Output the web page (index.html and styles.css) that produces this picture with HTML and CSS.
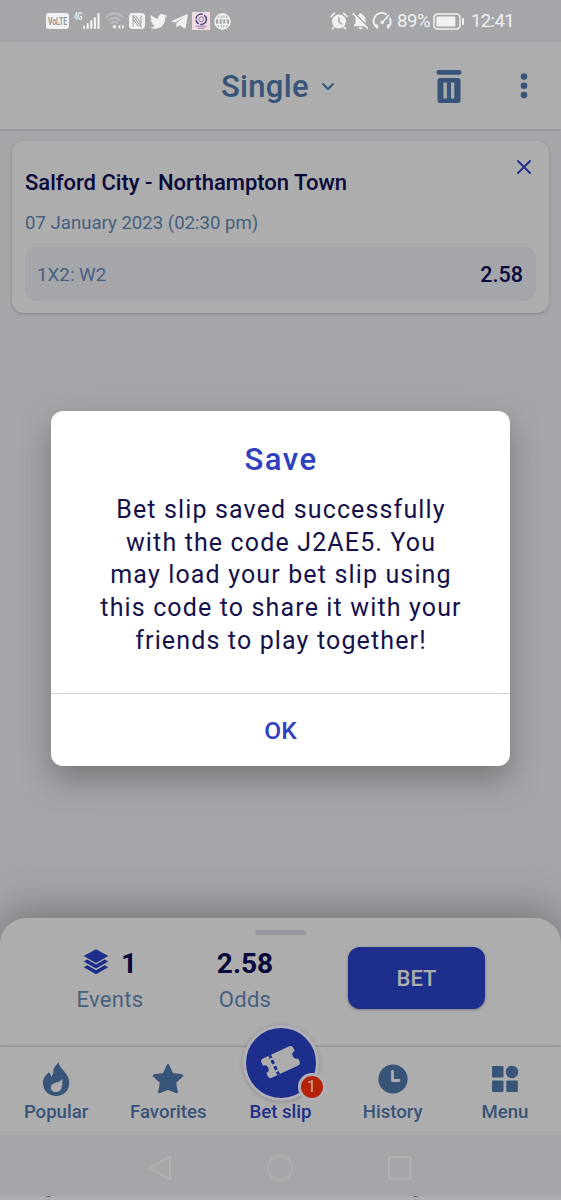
FILE: index.html
```html
<!DOCTYPE html>
<html lang="en">
<head>
  <meta charset="UTF-8">
  <meta name="viewport" content="width=device-width, initial-scale=1.0">
  <title>Bet slip</title>
  <link rel="stylesheet" href="styles.css">
</head>
<body>
  <div class="screen">
    <div class="status-bar">
      <div class="status-left">
        <svg class="volte" width="23" height="16" viewBox="0 0 23 16">
          <rect width="23" height="16" rx="3" fill="#f0f1f1"/>
          <text x="2" y="11.500" textLength="19" lengthAdjust="spacingAndGlyphs">VoLTE</text>
        </svg>
        <svg class="net" width="9" height="9" viewBox="0 0 9 9"><text x="0" y="8" textLength="8.500" lengthAdjust="spacingAndGlyphs">4G</text></svg>
        <svg class="signal" width="17" height="16" viewBox="0 0 17 16" fill="#f0f1f1">
          <rect x="0" y="12.500" width="2" height="3.500" rx="1"/>
          <rect x="3.600" y="10" width="2.200" height="6" rx="1"/>
          <rect x="7.200" y="7" width="2.200" height="9" rx="1"/>
          <rect x="10.800" y="4" width="2.200" height="12" rx="1"/>
          <rect x="14.400" y="0" width="2.200" height="16" rx="1"/>
        </svg>
        <svg class="wifi" width="20" height="18" viewBox="0 0 20 18" fill="none" stroke="#bcbdc0" stroke-width="1.800">
          <path d="M.8 5.200Q9.500-2.700 18.200 5.200"/>
          <path d="M3.600 8.400Q9.500 3 15.400 8.400"/>
          <path d="M6.200 11.300Q9.500 8.300 12.800 11.300"/>
          <circle cx="9.500" cy="14.800" r="1.700" fill="#f0f1f1" stroke="none"/>
          <path d="M12.800 14.800l2.600-2.400v4.800zM19.600 14.800l-2.600-2.400v4.800z" fill="#f0f1f1" stroke="none"/>
        </svg>
        <svg class="nfc" width="16" height="16" viewBox="0 0 16 16">
          <rect width="16" height="16" rx="3.500" fill="#f0f1f1"/>
          <path d="M4 13.500V2.500L8.500 9M11.900 2.500V13.500L7.500 7.200M6.500 2.500L11.900 10.200M4 5.800L9.400 13.500" fill="none" stroke="#a5a6aa" stroke-width="1.100"/>
        </svg>
        <svg class="bird" width="17" height="15" viewBox="0 2 24 20" preserveAspectRatio="none" fill="#f0f1f1">
          <path d="M23.950 4.570a10 10 0 0 1-2.820.770 4.960 4.960 0 0 0 2.160-2.720 9.900 9.900 0 0 1-3.120 1.180 4.920 4.920 0 0 0-8.380 4.480A13.930 13.930 0 0 1 1.640 3.160a4.920 4.920 0 0 0 1.520 6.570 4.900 4.900 0 0 1-2.230-.610v.060a4.920 4.920 0 0 0 3.950 4.830 5 5 0 0 1-2.210.080 4.940 4.940 0 0 0 4.600 3.420A9.870 9.870 0 0 1 0 19.540a14 14 0 0 0 7.550 2.210c9.050 0 14-7.500 14-13.990 0-.210 0-.420-.020-.630a9.940 9.940 0 0 0 2.420-2.560z"/>
        </svg>
        <svg class="plane" width="17" height="15" viewBox="0 0 17 15" fill="#f0f1f1">
          <path d="M.5 7L16 .2Q17 0 16.800 1L14.600 13.800Q14.200 15 13.200 14.300L8.500 10.900L6 13.200Q5.300 13.500 5.300 12.500V9.200L13.200 3L4 8.400L.7 7.600Q0 7.300.5 7z"/>
        </svg>
        <svg class="crest" width="18" height="18" viewBox="0 0 18 18">
          <rect width="18" height="18" fill="#f3dbe3"/>
          <circle cx="9.200" cy="7.300" r="5.200" fill="none" stroke="#4a4380" stroke-width="1.500" stroke-dasharray="9 1.500 5 1"/>
          <circle cx="9.200" cy="7.300" r="2.500" fill="none" stroke="#7a70a8" stroke-width=".9"/>
          <path d="M3.500 14.300h11M6 16.300h6.500" stroke="#8f84ac" stroke-width="1"/>
        </svg>
        <svg class="globe" width="17" height="17" viewBox="0 0 17 17" fill="none" stroke="#f0f1f1" stroke-width="1.500">
          <circle cx="8.500" cy="8.500" r="7.500"/>
          <ellipse cx="8.500" cy="8.500" rx="3.600" ry="7.500"/>
          <path d="M8.500 1v15M1.800 5.500h13.400M1.800 11.500h13.400"/>
        </svg>
      </div>
      <div class="status-right">
        <svg width="18" height="18" viewBox="0 0 18 18">
          <circle cx="9" cy="9.500" r="7" fill="#f0f1f1"/>
          <path d="M1 4.500L4.500 1.200M17 4.500L13.500 1.200M4 15l-1.500 1.700M14 15l1.500 1.700" stroke="#f0f1f1" stroke-width="1.700" stroke-linecap="round"/>
          <path d="M9 5.500V10l3 2.300" fill="none" stroke="#a5a6aa" stroke-width="1.500"/>
        </svg>
        <svg class="bell" width="17" height="18" viewBox="0 0 17 18">
          <path d="M2 14.200V13L3.500 11.300V7.500Q3.700 3.500 7 2.600Q7.200 1 8.500 1T10 2.600Q13.300 3.500 13.500 7.500V11.300L15 13V14.200zM6.500 15.300h4Q10.300 17.200 8.500 17.200T6.500 15.300z" fill="#f0f1f1"/>
          <path d="M2.300 1.200L17 16" stroke="#a5a6aa" stroke-width="1.800"/>
          <path d="M.8 1.400L15.800 16.600" stroke="#f0f1f1" stroke-width="1.500"/>
        </svg>
        <svg class="gauge" width="19" height="18" viewBox="0 0 19 18" fill="none" stroke="#f0f1f1" stroke-width="1.900" stroke-linecap="round">
          <path d="M4.300 15.800A8 8 0 0 1 13 2.200M16.800 6.500A8 8 0 0 1 14.800 15.800M4.300 15.800l-.2-2.500M14.800 15.800l.2-2.500"/>
          <path d="M15.500 3.200L9.300 10.500" stroke-width="1.500"/>
          <circle cx="9.200" cy="10.500" r=".7" fill="#f0f1f1"/>
        </svg>
        <span class="percent">89%</span>
        <svg class="battery" width="32" height="17" viewBox="0 0 32 17">
          <rect x="1" y="1" width="26" height="15" rx="3.500" fill="none" stroke="#f0f1f1" stroke-width="1.500"/>
          <rect x="3.300" y="3.400" width="19" height="10.200" rx="1" fill="#f0f1f1"/>
          <rect x="29" y="5" width="2" height="7" rx="1" fill="#f0f1f1"/>
        </svg>
        <span class="clock">12:41</span>
      </div>
    </div>

    <header class="header">
      <div class="mode">
        <span>Single</span>
        <svg width="14" height="10" viewBox="0 0 14 10" fill="none" stroke="#385478" stroke-width="2" stroke-linecap="round" stroke-linejoin="round"><path d="M2 2l5 5 5-5"/></svg>
      </div>
      <svg class="trash" width="26" height="34" viewBox="0 0 26 34" fill="#385478">
        <rect x=".5" y="0" width="25" height="4.700" rx="2.300"/>
        <path fill-rule="evenodd" d="M4 8h18q2.500 0 2.500 2.500v20q0 2.500-2.500 2.500H4q-2.500 0-2.500-2.500v-20Q1.500 8 4 8zM7.500 12.500v16h3.300v-16zM15 12.500v16h3.300v-16z"/>
      </svg>
      <svg class="more" width="8" height="28" viewBox="0 0 8 28" fill="#385478"><circle cx="4" cy="4.500" r="3.300"/><circle cx="4" cy="13.800" r="3.300"/><circle cx="4" cy="23" r="3.300"/></svg>
    </header>

    <main class="content">
      <div class="bet-card">
        <svg class="remove" width="16" height="16" viewBox="0 0 16 16" stroke="#1e2e8c" stroke-width="1.900" stroke-linecap="round"><path d="M2 2l12 12M14 2L2 14"/></svg>
        <h2>Salford City - Northampton Town</h2>
        <p class="date">07 January 2023 (02:30 pm)</p>
        <div class="pick">
          <span>1X2: W2</span>
          <b>2.58</b>
        </div>
      </div>
    </main>

    <section class="sheet">
      <div class="handle"></div>
      <div class="summary">
        <div class="stat events">
          <div class="value">
            <svg width="26" height="26" viewBox="0 0 26 26" fill="#1e2e8c">
              <path d="M13 .3L25.300 7 13 14 .7 7z"/>
              <path d="M.7 12.500l3.600-2 8.700 5 8.700-5 3.600 2L13 19.500z"/>
              <path d="M.7 18.200l3.600-2 8.700 5 8.700-5 3.600 2L13 25.200z"/>
            </svg>
            <b>1</b>
          </div>
          <span>Events</span>
        </div>
        <div class="stat odds">
          <div class="value"><b>2.58</b></div>
          <span>Odds</span>
        </div>
        <button class="bet-button">BET</button>
      </div>
    </section>

    <nav class="tabs">
      <div class="tab">
        <svg width="28" height="36" viewBox="0 0 28 36">
          <path d="M16.500 1C17 8 27.200 11.500 27.200 21.800C27.200 30 21.500 35 14 35S1 29.500 1 22C1 17 3.500 14.500 7 11.300C8.500 13 9 14 9.300 16C11.500 13.500 11.500 10 11.500 8C13 5 14.500 4 16.500 1z" fill="#385478"/>
          <path d="M20.500 17.500C20.200 25 20.500 31 13.800 31C10.500 31 8.500 28.500 8.800 26C9.500 20.500 18 22.500 20.500 17.500z" fill="#adadad"/>
        </svg>
        <span>Popular</span>
      </div>
      <div class="tab">
        <svg width="32" height="32" viewBox="0 0 32 32"><path d="M16 2.200l4.200 9 9.800 1.300-7.200 6.800 1.800 9.800L16 25.500l-8.600 3.600 1.800-9.800L2 12.500l9.800-1.300z" fill="#385478" stroke="#385478" stroke-width="2.500" stroke-linejoin="round"/></svg>
        <span>Favorites</span>
      </div>
      <div class="tab active">
        <div class="bubble">
          <svg width="72" height="72" viewBox="0 0 72 72">
            <g transform="translate(35.500 35) rotate(-25)">
              <path d="M-14.500-10.500H14.500Q17.500-10.500 17.500-7.500V-4A4 4 0 0 0 17.500 4V7.500Q17.500 10.500 14.500 10.500H-14.500Q-17.500 10.500-17.500 7.500V4A4 4 0 0 0-17.500-4V-7.500Q-17.500-10.500-14.500-10.500z" fill="#adadad"/>
              <path d="M-7-10.500V10.500" stroke="#1e2e8c" stroke-width="3" stroke-dasharray="3 2.200 4 2.600 4 2.200 3"/>
            </g>
          </svg>
          <span class="badge">1</span>
        </div>
        <span>Bet slip</span>
      </div>
      <div class="tab">
        <svg width="30" height="30" viewBox="0 0 30 30"><circle cx="15" cy="15" r="14.600" fill="#385478"/><path d="M14.500 7.500v9h6.500" fill="none" stroke="#adadad" stroke-width="2.800" stroke-linecap="round" stroke-linejoin="round"/></svg>
        <span>History</span>
      </div>
      <div class="tab">
        <svg width="28" height="28" viewBox="0 0 28 28" fill="#385478"><rect x="1" y="1" width="11.500" height="11.500" rx="1"/><circle cx="21" cy="7" r="6.200"/><rect x="1" y="15.500" width="11.500" height="11.500" rx="1"/><rect x="15.300" y="15.500" width="11.500" height="11.500" rx="1"/></svg>
        <span>Menu</span>
      </div>
    </nav>

    <div class="system-bar">
      <svg width="26" height="28" viewBox="0 0 26 28"><path d="M2.500 14L23 2.500v23z"/></svg>
      <svg width="28" height="28" viewBox="0 0 28 28"><circle cx="14" cy="14" r="12"/></svg>
      <svg width="26" height="26" viewBox="0 0 26 26"><rect x="2" y="2" width="21.500" height="21.500" rx="1"/></svg>
    </div>
    <div class="edge"><i></i><i></i></div>

    <div class="dialog">
      <div class="dialog-body">
        <h1>Save</h1>
        <p>Bet slip saved successfully<br>with the code J2AE5. You<br>may load your bet slip using<br>this code to share it with your<br>friends to play together!</p>
      </div>
      <button class="ok">OK</button>
    </div>
  </div>
</body>
</html>
```
FILE: styles.css
```css
* {
  box-sizing: border-box;
}

body {
  margin: 0;
  background: #a5a6aa;
  font-family: Roboto, "Liberation Sans", sans-serif;
}

h1, h2, p {
  margin: 0;
}

button {
  border: none;
  font-family: inherit;
  cursor: pointer;
}

svg {
  display: block;
  flex-shrink: 0;
  overflow: visible;
}

.screen {
  position: relative;
  display: flex;
  flex-direction: column;
  width: 561px;
  height: 1200px;
  overflow: hidden;
  background: #a5a6aa;
}

/* status bar */
.status-bar {
  display: flex;
  justify-content: space-between;
  height: 42px;
  padding: 0 46px;
  color: #f0f1f1;
}

.status-left, .status-right {
  display: flex;
  align-items: center;
  height: 42px;
}

.volte text {
  fill: #96979b;
  font-size: 10px;
  font-weight: 700;
}

.net {
  margin: 0 0 9px 5px;
}

.net text {
  fill: #f0f1f1;
  font-size: 10px;
  font-weight: 500;
}

.wifi {
  margin-left: 5px;
}

.nfc {
  margin-left: 4px;
}

.bird {
  margin-left: 5px;
}

.plane {
  margin-left: 4px;
}

.crest {
  margin-left: 4px;
}

.globe {
  margin-left: 4px;
}

.bell, .gauge {
  margin-left: 4px;
}

.percent {
  width: 33px;
  margin-left: 5px;
  font-size: 18.5px;
  letter-spacing: -0.4px;
}

.battery {
  margin-left: 3px;
}

.clock {
  width: 44px;
  margin-left: 6px;
  font-size: 18.5px;
  letter-spacing: -0.6px;
}

/* header */
.header {
  display: flex;
  align-items: center;
  height: 87px;
  background: #adadad;
  box-shadow: 0 1px 2px rgba(60, 60, 75, 0.2);
}

.mode {
  display: flex;
  align-items: center;
  gap: 12px;
  margin-left: 221px;
  padding-top: 2px;
  color: #385478;
  font-size: 31px;
  font-weight: 500;
  letter-spacing: 0.3px;
}

.trash {
  margin-left: auto;
  margin-top: 2px;
  margin-right: 58px;
}

.more {
  margin-right: 33px;
}

/* slip */
.content {
  flex: 1;
  padding: 12px;
}

.bet-card {
  position: relative;
  height: 172px;
  padding: 27px 13px 0;
  border-radius: 12px;
  background: #adadad;
  box-shadow: 0 1px 3px rgba(60, 60, 75, 0.3);
}

.remove {
  position: absolute;
  top: 18px;
  right: 17px;
}

.bet-card h2 {
  color: #07073a;
  font-size: 22px;
  font-weight: 500;
  line-height: 30px;
}

.date {
  margin-top: 11px;
  color: #47607e;
  font-size: 18.6px;
  line-height: 28px;
}

.pick {
  display: flex;
  align-items: center;
  justify-content: space-between;
  height: 54px;
  margin-top: 10px;
  padding: 1px 13px 0 12px;
  border-radius: 12px;
  background: #a5a6aa;
  color: #47607e;
  font-size: 18.8px;
}

.pick b {
  color: #07073a;
  font-size: 21.5px;
  font-weight: 500;
}

/* bottom sheet */
.sheet {
  height: 129px;
  border-radius: 26px 26px 0 0;
  background: #adadad;
  box-shadow: 0 -8px 36px 4px rgba(60, 60, 60, 0.38);
}

.handle {
  width: 51px;
  height: 5px;
  margin: 12px auto 0;
  border-radius: 3px;
  background: #96979f;
}

.summary {
  display: flex;
  align-items: flex-start;
  padding-left: 76px;
}

.stat {
  display: flex;
  flex-direction: column;
  align-items: center;
  margin-top: 11px;
  color: #47607e;
  font-size: 22px;
  line-height: 36px;
  letter-spacing: 0.3px;
}

.events {
  width: 68px;
}

.events svg {
  margin-top: -4px;
}

.odds {
  width: 70px;
  margin-left: 66px;
}

.value {
  display: flex;
  align-items: center;
  gap: 12px;
  height: 36px;
  color: #07073a;
  font-size: 28px;
  letter-spacing: 0;
}

.value b {
  font-weight: 700;
}

.bet-button {
  width: 137px;
  height: 62px;
  margin: 12px 0 0 68px;
  border-radius: 12px;
  background: #1e2e8c;
  box-shadow: 0 1px 3px rgba(40, 40, 60, 0.4);
  color: #adadad;
  font-size: 22px;
  font-weight: 500;
}

/* tabs */
.tabs {
  display: flex;
  height: 88px;
  background: #adadad;
  box-shadow: 0 -1px 2px rgba(60, 60, 75, 0.3);
  z-index: 1;
}

.tab {
  position: relative;
  display: flex;
  flex: 1;
  flex-direction: column;
  align-items: center;
  justify-content: space-between;
  padding: 14px 0 11px;
  color: #385478;
  font-size: 18.6px;
  font-weight: 500;
  line-height: 24px;
}

.tab > svg {
  height: 36px;
}

.active {
  justify-content: flex-end;
  color: #1e2e8c;
}

/* the active tab icon rises over the sheet */
.bubble {
  position: absolute;
  top: -22px;
  left: 50%;
  width: 76px;
  height: 76px;
  margin-left: -38px;
  border: 3px solid #b0b0b6;
  border-radius: 50%;
  background: #1e2e8c;
  box-shadow: 0 1px 4px rgba(60, 60, 90, 0.3);
}

.bubble svg {
  margin: -1px;
}

.badge {
  position: absolute;
  right: -10px;
  bottom: -3px;
  width: 28px;
  height: 28px;
  border: 3px solid #b0b0b6;
  border-radius: 50%;
  background: #b42208;
  color: #c8b0a8;
  font-size: 16px;
  font-weight: 400;
  line-height: 22px;
  text-align: center;
}

/* system navigation */
.system-bar {
  position: relative;
  z-index: 1;
  display: flex;
  align-items: center;
  justify-content: space-between;
  height: 61px;
  padding: 5px 148px 0 147px;
  background: #a5a6aa;
  fill: none;
  stroke: #b0b0b3;
  stroke-width: 2;
  stroke-linejoin: round;
}

.edge {
  display: flex;
  justify-content: space-between;
  height: 4px;
  padding: 0 144px 0 47px;
  background: #adadad;
}

.edge i {
  width: 3px;
  height: 1px;
  background: #55565c;
}

/* dialog */
.dialog {
  position: absolute;
  top: 411px;
  left: 51px;
  z-index: 2;
  display: flex;
  flex-direction: column;
  width: 459px;
  height: 355px;
  border-radius: 12px;
  background: #fff;
  box-shadow: 0 14px 32px rgba(40, 40, 40, 0.36);
  text-align: center;
}

.dialog-body {
  height: 283px;
  padding-top: 29px;
  border-bottom: 1px solid #cfd1e4;
}

.dialog h1 {
  padding-left: 1px;
  color: #2e40c0;
  font-size: 31px;
  font-weight: 500;
  line-height: 40px;
  letter-spacing: 1.5px;
}

.dialog p {
  margin-top: 14px;
  padding-left: 1px;
  color: #14114d;
  font-size: 25px;
  line-height: 32.7px;
  letter-spacing: 1.14px;
}

.ok {
  flex: 1;
  padding-top: 1px;
  border-radius: 0 0 12px 12px;
  background: none;
  color: #2e40c0;
  font-size: 24.5px;
  font-weight: 500;
}
```
